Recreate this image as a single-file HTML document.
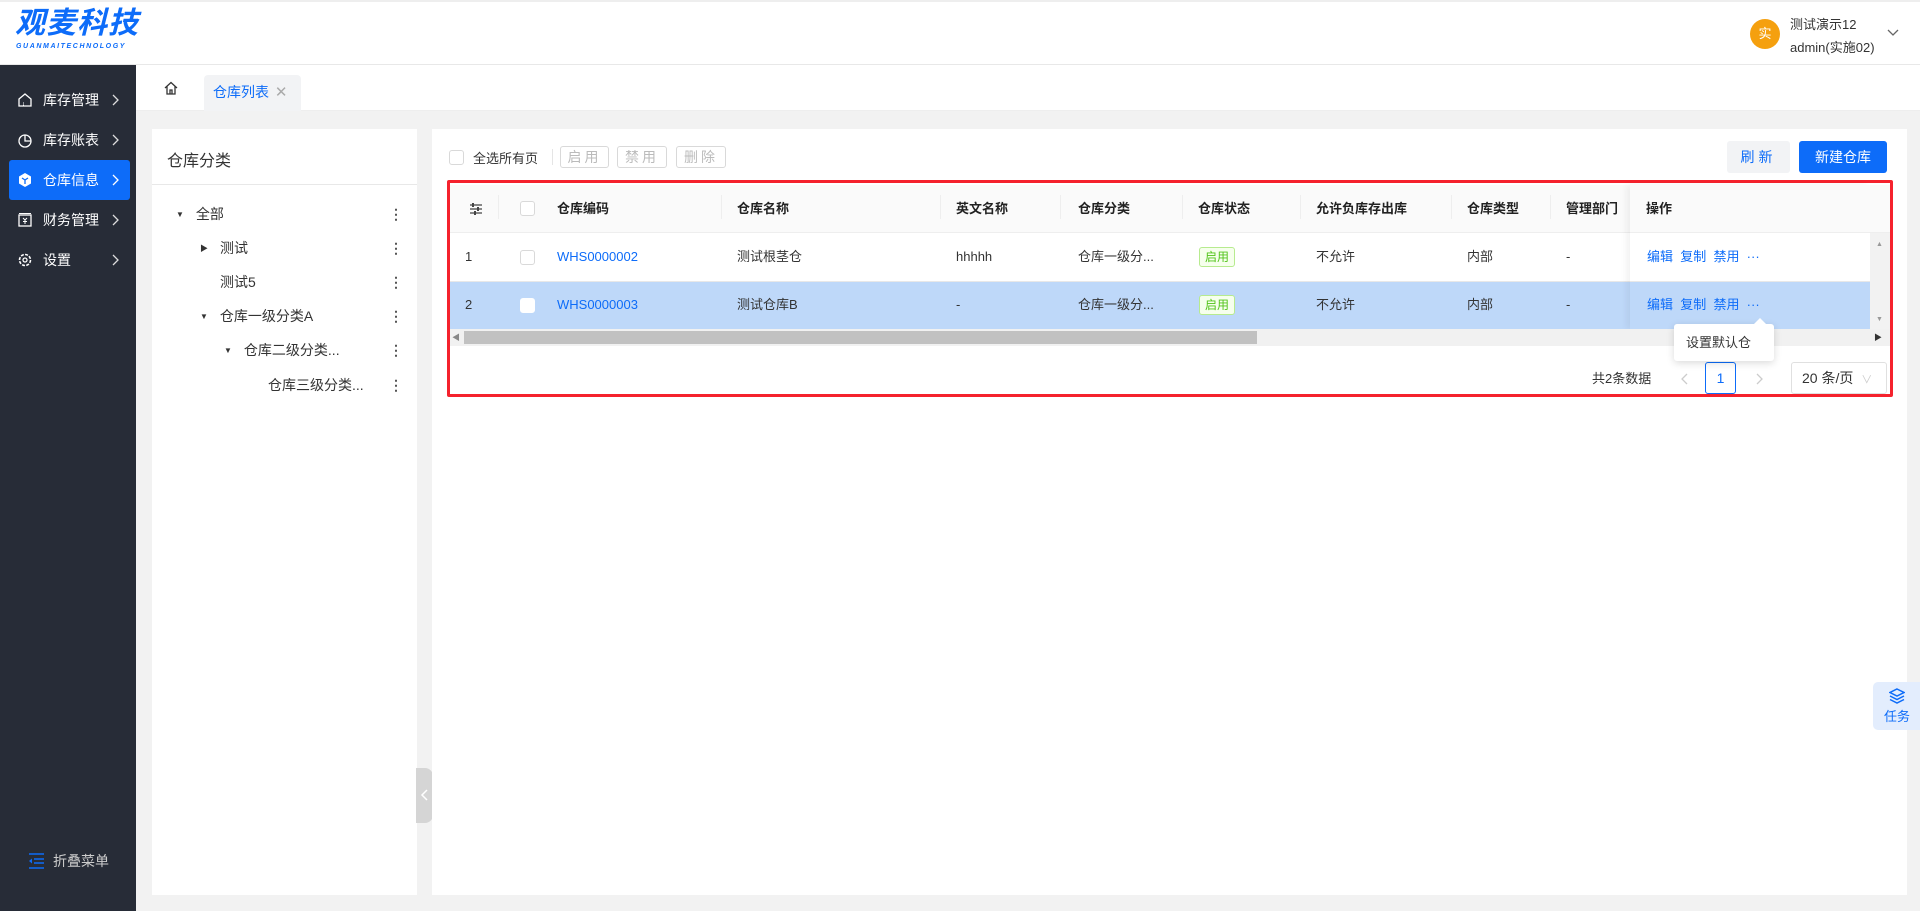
<!DOCTYPE html>
<html><head><meta charset="utf-8">
<style>
*{box-sizing:border-box;margin:0;padding:0}
body{width:1920px;height:911px;overflow:hidden;background:#f2f2f2;font-family:"Liberation Sans","Noto Sans CJK SC",sans-serif;font-size:14px;color:#333;position:relative}
.abs{position:absolute}
.hdr{left:0;top:0;width:1920px;height:65px;background:#fff;border-bottom:1px solid #e8e8e8;border-top:2px solid #eee}
.side{left:0;top:65px;width:136px;height:846px;background:#272c37}
.mi{position:absolute;left:9px;width:121px;height:40px;color:#fff;font-size:14px;line-height:40px;padding-left:34px}
.mi .ar{position:absolute;right:10px;top:14px}
.mi svg.ic{position:absolute;left:8px;top:12px}
.act{background:#0d6cf9;border-radius:3px}
.tabs{left:136px;top:65px;width:1784px;height:46px;background:#fff;border-bottom:1px solid #eee}
.panel{background:#fff}
.tree{position:absolute;left:0;font-size:14px;color:#333;line-height:20px}
.dots{position:absolute;left:237px;color:#555;font-weight:bold;font-size:14px;line-height:20px}
.btn{position:absolute;height:22px;border:1px solid #d9d9d9;border-radius:3px;color:#bbb;font-size:14px;text-align:center;line-height:20px;letter-spacing:3px}
.cb{position:absolute;width:15px;height:15px;border:1px solid #d9d9d9;border-radius:3px;background:#fff}
.th{position:absolute;top:16px;font-weight:bold;font-size:13px;color:#222;line-height:20px}
.td{position:absolute;font-size:13px;color:#333;line-height:20px}
.lk{color:#0d6cf9}
.tag{position:absolute;border:1px solid #b7eb8f;background:#f6ffed;color:#52c41a;font-size:12px;padding:0 5px;line-height:18px;border-radius:3px}
.sep{position:absolute;top:12px;width:1px;height:24px;background:#eee}
</style></head><body>
<div class="abs hdr">
  <div class="abs" style="left:15px;top:5px;font-size:30px;line-height:34px;font-style:italic;font-weight:bold;color:#0d6cf9;letter-spacing:1px">观麦科技</div>
  <div class="abs" style="left:16px;top:41px;font-size:7px;line-height:8px;font-style:italic;font-weight:bold;color:#0d6cf9;letter-spacing:1.6px">GUANMAITECHNOLOGY</div>
  <div class="abs" style="left:1750px;top:17px;width:30px;height:30px;border-radius:50%;background:#f5a00f;color:#fff;font-size:13px;text-align:center;line-height:30px">实</div>
  <div class="abs" style="left:1790px;top:12px;font-size:13px;color:#333">测试演示12</div>
  <div class="abs" style="left:1790px;top:35px;font-size:13px;color:#333">admin(实施02)</div>
  <svg class="abs" style="left:1887px;top:27px" width="12" height="8"><path d="M1 1l5 5 5-5" stroke="#666" fill="none" stroke-width="1.3"/></svg>
</div>
<div class="abs side">
  <div class="mi" style="top:15px"><svg class="ic" width="16" height="16"><path d="M2 7l6-5 6 5v7H2z" stroke="#fff" fill="none" stroke-width="1.3"/><path d="M6 11h1M6 13h1" stroke="#fff"/></svg>库存管理<svg class="ar" width="8" height="12"><path d="M1 1l5 5-5 5" stroke="#ddd" fill="none" stroke-width="1.3"/></svg></div>
  <div class="mi" style="top:55px"><svg class="ic" width="16" height="16"><circle cx="8" cy="9" r="6" stroke="#fff" fill="none" stroke-width="1.3"/><path d="M8 3v6h6" stroke="#fff" fill="none" stroke-width="1.3"/></svg>库存账表<svg class="ar" width="8" height="12"><path d="M1 1l5 5-5 5" stroke="#ddd" fill="none" stroke-width="1.3"/></svg></div>
  <div class="mi act" style="top:95px"><svg class="ic" width="16" height="16"><path d="M8 1l6 3.5v7L8 15l-6-3.5v-7z" fill="#fff"/><path d="M5 6l3 2 3-2M8 8v4" stroke="#0d6cf9" fill="none" stroke-width="1.3"/></svg>仓库信息<svg class="ar" width="8" height="12"><path d="M1 1l5 5-5 5" stroke="#fff" fill="none" stroke-width="1.3"/></svg></div>
  <div class="mi" style="top:135px"><svg class="ic" width="16" height="16"><rect x="2" y="3" width="12" height="11" stroke="#fff" fill="none" stroke-width="1.3"/><path d="M2 1.5h12M6 6l2 2 2-2M8 8v4M6 9.5h4" stroke="#fff" fill="none"/></svg>财务管理<svg class="ar" width="8" height="12"><path d="M1 1l5 5-5 5" stroke="#ddd" fill="none" stroke-width="1.3"/></svg></div>
  <div class="mi" style="top:175px"><svg class="ic" width="16" height="16"><circle cx="8" cy="8" r="5.5" stroke="#fff" fill="none" stroke-width="1.6" stroke-dasharray="3 1.3"/><circle cx="8" cy="8" r="2" stroke="#fff" fill="none" stroke-width="1.3"/></svg>设置<svg class="ar" width="8" height="12"><path d="M1 1l5 5-5 5" stroke="#ddd" fill="none" stroke-width="1.3"/></svg></div>
  <svg class="abs" style="left:28px;top:788px" width="16" height="16"><path d="M1 1h15M6 6h10M6 10h10M1 15h15" stroke="#0d6cf9" stroke-width="1.6"/><path d="M1 8l3-2.5v5z" fill="#0d6cf9"/></svg>
  <div class="abs" style="left:53px;top:786px;color:#ccc;font-size:14px">折叠菜单</div>
</div>
<div class="abs tabs">
  <svg class="abs" style="left:28px;top:16px" width="14" height="14"><path d="M1 7l6-5.5L13 7M3 5.5V13h8V5.5M6 13V9h2v4" stroke="#333" fill="none" stroke-width="1.3"/></svg>
  <div class="abs" style="left:68px;top:10px;width:97px;height:36px;background:#f2f3f5;border-radius:4px 4px 0 0;color:#0d6cf9;font-size:14px;line-height:34px;padding-left:9px">仓库列表 <span style="color:#aaa;font-size:15px;margin-left:2px">✕</span></div>
</div>
<div class="abs panel" style="left:152px;top:129px;width:265px;height:766px">
  <div class="abs" style="left:15px;top:18px;font-size:16px;color:#333">仓库分类</div>
  <div class="abs" style="left:0;top:55px;width:265px;height:1px;background:#e8e8e8"></div>
  <div class="abs" style="left:0;top:75px;width:265px">
    <div class="tree" style="top:0;left:24px"><span style="font-size:8px;margin-right:12px;vertical-align:2px">▼</span>全部</div><div class="dots" style="top:0">⋮</div>
    <div class="tree" style="top:34px;left:48px"><span style="font-size:8px;margin-right:12px;vertical-align:2px">▶</span>测试</div><div class="dots" style="top:34px">⋮</div>
    <div class="tree" style="top:68px;left:68px">测试5</div><div class="dots" style="top:68px">⋮</div>
    <div class="tree" style="top:102px;left:48px"><span style="font-size:8px;margin-right:12px;vertical-align:2px">▼</span>仓库一级分类A</div><div class="dots" style="top:102px">⋮</div>
    <div class="tree" style="top:136px;left:72px"><span style="font-size:8px;margin-right:12px;vertical-align:2px">▼</span>仓库二级分类...</div><div class="dots" style="top:136px">⋮</div>
    <div class="tree" style="top:171px;left:116px">仓库三级分类...</div><div class="dots" style="top:171px">⋮</div>
  </div>
</div>
<div class="abs" style="left:416px;top:768px;width:17px;height:55px;background:#d5d5d5;border-radius:0 8px 8px 0"><svg class="abs" style="left:4px;top:21px" width="8" height="12"><path d="M7 1L2 6l5 5" stroke="#fff" fill="none" stroke-width="1.5"/></svg></div>
<div class="abs panel" style="left:432px;top:129px;width:1475px;height:766px">
  <div class="cb" style="left:17px;top:21px"></div>
  <div class="abs" style="left:41px;top:19px;font-size:13px">全选所有页</div>
  <div class="abs" style="left:120px;top:20px;width:1px;height:16px;background:#e5e5e5"></div>
  <div class="btn" style="left:128px;top:17px;width:49px">启用</div>
  <div class="btn" style="left:185px;top:17px;width:50px">禁用</div>
  <div class="btn" style="left:244px;top:17px;width:50px">删除</div>
  <div class="abs" style="left:1295px;top:12px;width:63px;height:32px;background:#f2f3f5;border-radius:3px;color:#0d6cf9;text-align:center;line-height:32px;letter-spacing:4px">刷新</div>
  <div class="abs" style="left:1367px;top:12px;width:88px;height:32px;background:#0d6cf9;border-radius:3px;color:#fff;text-align:center;line-height:32px">新建仓库</div>
</div>
<div class="abs" style="left:447px;top:180px;width:1446px;height:217px;border:3px solid #f5222d;border-radius:2px;background:#fff">
  <div class="abs" style="left:0;top:2px;width:1440px;height:48px;background:#fafafa;border-bottom:1px solid #eee"></div>
  <svg class="abs" style="left:20px;top:20px" width="12" height="12"><path d="M0 2h12M0 6h12M0 10h12" stroke="#444" stroke-width="1.3"/><path d="M3 0v4M8 4v4M5 8v4" stroke="#444" stroke-width="2"/></svg>
  <div class="sep" style="left:48px"></div>
  <div class="cb" style="left:70px;top:18px"></div>
  <div class="th" style="left:107px">仓库编码</div>
  <div class="sep" style="left:271px"></div>
  <div class="th" style="left:287px">仓库名称</div>
  <div class="sep" style="left:490px"></div>
  <div class="th" style="left:506px">英文名称</div>
  <div class="sep" style="left:610px"></div>
  <div class="th" style="left:628px">仓库分类</div>
  <div class="sep" style="left:732px"></div>
  <div class="th" style="left:748px">仓库状态</div>
  <div class="sep" style="left:850px"></div>
  <div class="th" style="left:866px">允许负库存出库</div>
  <div class="sep" style="left:1001px"></div>
  <div class="th" style="left:1017px">仓库类型</div>
  <div class="sep" style="left:1100px"></div>
  <div class="th" style="left:1116px">管理部门</div>
  <div class="abs" style="left:0;top:98px;width:1420px;height:48px;background:#bed8f9"></div>
  <div class="abs" style="left:0;top:98px;width:1440px;height:1px;background:#e8e8e8"></div>
  <div class="td" style="left:15px;top:64px">1</div>
  <div class="cb" style="left:70px;top:67px"></div>
  <div class="td lk" style="left:107px;top:64px">WHS0000002</div>
  <div class="td" style="left:287px;top:64px">测试根茎仓</div>
  <div class="td" style="left:506px;top:64px">hhhhh</div>
  <div class="td" style="left:628px;top:64px">仓库一级分...</div>
  <div class="tag" style="left:749px;top:64px">启用</div>
  <div class="td" style="left:866px;top:64px">不允许</div>
  <div class="td" style="left:1017px;top:64px">内部</div>
  <div class="td" style="left:1116px;top:64px">-</div>
  <div class="td" style="left:15px;top:112px">2</div>
  <div class="cb" style="left:70px;top:115px;border-color:#fff"></div>
  <div class="td lk" style="left:107px;top:112px">WHS0000003</div>
  <div class="td" style="left:287px;top:112px">测试仓库B</div>
  <div class="td" style="left:506px;top:112px">-</div>
  <div class="td" style="left:628px;top:112px">仓库一级分...</div>
  <div class="tag" style="left:749px;top:112px">启用</div>
  <div class="td" style="left:866px;top:112px">不允许</div>
  <div class="td" style="left:1017px;top:112px">内部</div>
  <div class="td" style="left:1116px;top:112px">-</div>
  <div class="abs" style="left:1180px;top:2px;width:240px;height:144px;box-shadow:-4px 0 6px rgba(0,0,0,0.05)"></div>
  <div class="abs" style="left:1180px;top:2px;width:260px;height:48px;background:#fafafa;border-bottom:1px solid #eee"></div>
  <div class="abs" style="left:1180px;top:50px;width:240px;height:48px;background:#fff"></div>
  <div class="abs" style="left:1180px;top:99px;width:240px;height:47px;background:#bed8f9"></div>
  <div class="th" style="left:1196px">操作</div>
  <div class="td lk" style="left:1197px;top:64px">编辑 &nbsp;复制 &nbsp;禁用 &nbsp;···</div>
  <div class="td lk" style="left:1197px;top:112px">编辑 &nbsp;复制 &nbsp;禁用 &nbsp;···</div>
  <div class="abs" style="left:1420px;top:50px;width:20px;height:96px;background:#f2f2f2"><div style="margin:8px 0 0 6px;font-size:7px;color:#999">▲</div><div style="margin:68px 0 0 6px;font-size:7px;color:#999">▼</div></div>
  <div class="abs" style="left:0;top:146px;width:1440px;height:17px;background:#f1f1f1"><div class="abs" style="left:2px;top:3px;font-size:8px;color:#888">◀</div><div class="abs" style="left:14px;top:2px;width:793px;height:13px;background:#c1c1c1"></div><div class="abs" style="left:1424px;top:3px;font-size:8px;color:#333">▶</div></div>
  <div class="abs" style="left:1142px;top:185px;font-size:13px;color:#333">共2条数据</div>
  <svg class="abs" style="left:1230px;top:190px" width="8" height="12"><path d="M7 1L2 6l5 5" stroke="#ccc" fill="none" stroke-width="1.3"/></svg>
  <div class="abs" style="left:1255px;top:179px;width:31px;height:32px;border:1px solid #0d6cf9;border-radius:3px;color:#0d6cf9;text-align:center;line-height:30px;font-size:14px">1</div>
  <svg class="abs" style="left:1306px;top:190px" width="8" height="12"><path d="M1 1l5 5-5 5" stroke="#ccc" fill="none" stroke-width="1.3"/></svg>
  <div class="abs" style="left:1341px;top:179px;width:96px;height:32px;border:1px solid #e0e0e0;border-radius:3px;padding-left:10px;line-height:30px;font-size:14px">20 条/页 <span style="color:#ccc;font-size:11px;margin-left:4px">∨</span></div>
  <div class="abs" style="left:1224px;top:141px;width:100px;height:37px;background:#fff;border-radius:3px;box-shadow:0 2px 8px rgba(0,0,0,0.15);font-size:13px;line-height:37px;padding-left:12px">设置默认仓</div>
  <div class="abs" style="left:1304px;top:135px;width:0;height:0;border-left:6px solid transparent;border-right:6px solid transparent;border-bottom:6px solid #fff"></div>
</div>
<div class="abs" style="left:1873px;top:682px;width:47px;height:48px;background:#e3edfd;border-radius:5px 0 0 5px">
  <svg class="abs" style="left:16px;top:6px" width="16" height="16"><path d="M8 1l7 3.5-7 3.5-7-3.5z" fill="none" stroke="#0d6cf9" stroke-width="1.5"/><path d="M1 8l7 3.5L15 8M1 11.5L8 15l7-3.5" fill="none" stroke="#0d6cf9" stroke-width="1.5"/></svg>
  <div class="abs" style="left:11px;top:24px;color:#0d6cf9;font-size:13px">任务</div>
</div>
</body></html>
